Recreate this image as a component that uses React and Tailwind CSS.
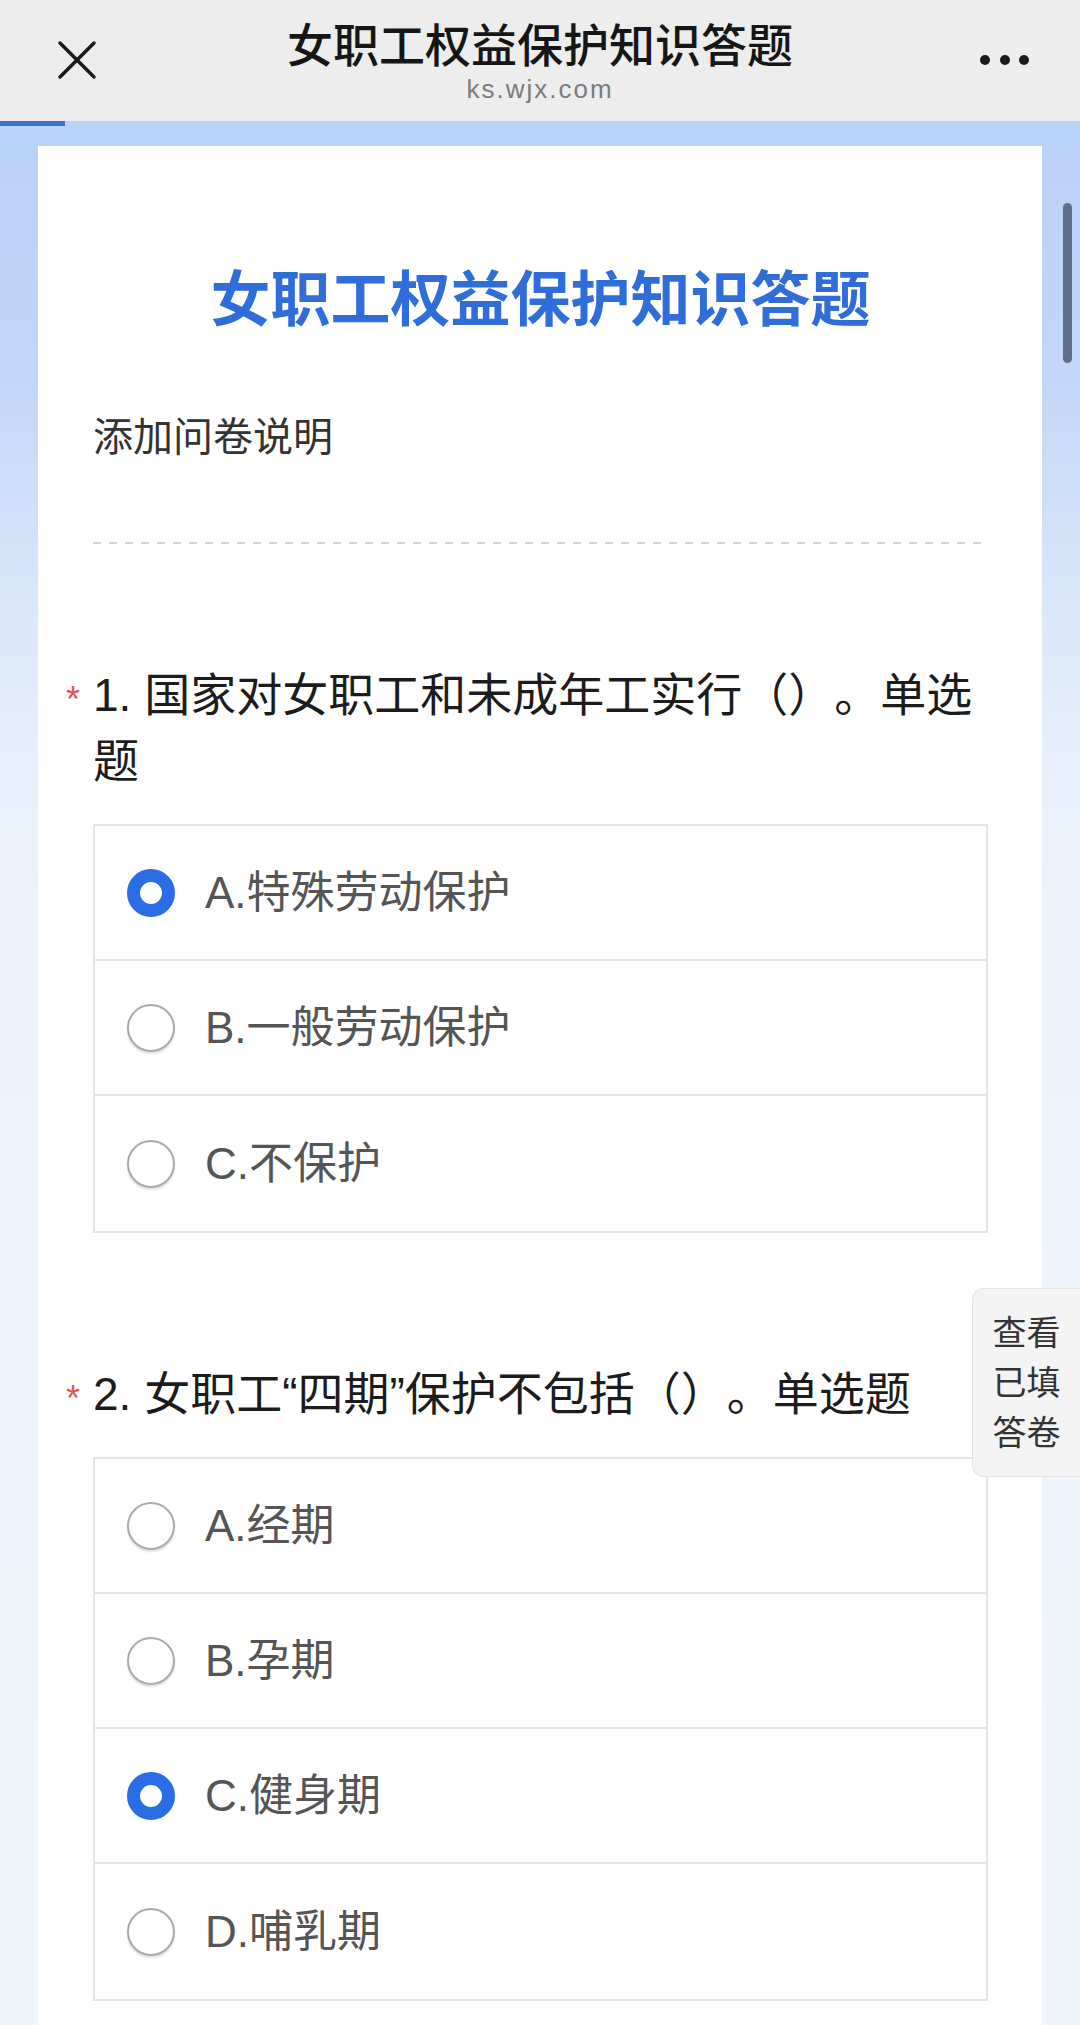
import React from 'react';

const questions = [
  {
    no: 1,
    text: '国家对女职工和未成年工实行（）。单选题',
    options: ['A.特殊劳动保护', 'B.一般劳动保护', 'C.不保护'],
    picked: 0,
  },
  {
    no: 2,
    text: '女职工“四期”保护不包括（）。单选题',
    options: ['A.经期', 'B.孕期', 'C.健身期', 'D.哺乳期'],
    picked: 2,
  },
];

const Radio = ({ on }) =>
  on ? (
    <span className="w-12 h-12 shrink-0 rounded-full border-[13px] border-[#2b6de5] bg-white"></span>
  ) : (
    <span className="w-12 h-12 shrink-0 rounded-full border-[2.5px] border-[#ababab] bg-white shadow-[0_2px_2px_rgba(0,0,0,0.12)]"></span>
  );

const Question = ({ q, className }) => (
  <div className={className}>
    <div className="flex -ml-[27px]">
      <span className="w-[27px] shrink-0 pt-[20px] text-[36px] leading-[36px] text-[#e05555]">*</span>
      <div className="flex-1 text-[46px] leading-[66px] text-[#1c1c1c] [text-spacing-trim:space-all]">
        {`${q.no}. ${q.text}`}
      </div>
    </div>
    <div className="mt-[30px] border-2 border-[#e5e5e5] divide-y-2 divide-[#e5e5e5]">
      {q.options.map((opt, i) => (
        <div key={opt} className="h-[135px] flex items-center pl-[32px]">
          <Radio on={i === q.picked} />
          <span className="ml-[30px] text-[44px] leading-[50px] text-[#555]">{opt}</span>
        </div>
      ))}
    </div>
  </div>
);

export default function App() {
  return (
    <div className="relative w-full h-[2025px] overflow-hidden font-['Liberation_Sans','Noto_Sans_CJK_SC',sans-serif]">
      <header className="h-[121px] bg-[#ededed] flex items-start">
        <div className="w-[120px] pl-[57px] pt-[40px]">
          <svg width="40" height="40" viewBox="0 0 40 40" fill="none" stroke="#1a1a1a" strokeWidth="3.5" strokeLinecap="round">
            <path d="M3 3L37 37M37 3L3 37" />
          </svg>
        </div>
        <div className="flex-1 flex flex-col items-center pt-[18px]">
          <div className="text-[46px] leading-[56px] font-medium text-[#161616]">女职工权益保护知识答题</div>
          <div className="text-[26px] leading-[30px] tracking-[2px] text-[#7c7c7c]">ks.wjx.com</div>
        </div>
        <div className="w-[120px] pl-[20px] pt-[55px] flex gap-[9.5px]">
          <span className="w-[10px] h-[10px] rounded-full bg-[#1a1a1a]"></span>
          <span className="w-[10px] h-[10px] rounded-full bg-[#1a1a1a]"></span>
          <span className="w-[10px] h-[10px] rounded-full bg-[#1a1a1a]"></span>
        </div>
      </header>

      <main className="px-[38px] h-[1904px] bg-[linear-gradient(to_bottom,#b9d1f6_0px,#c3d8f7_260px,#e4eefb_600px,#eef4fc_800px,#f1f6fc_100%)]">
        <div className="-ml-[38px] h-[5px] w-[65px] bg-[#3a70d0]"></div>
        <section className="mt-[20px] bg-white h-[1879px] pt-[120px] pl-[55px] pr-[54px]">
          <h1 className="text-center text-[60px] leading-[70px] font-bold text-[#2f6ddb]">女职工权益保护知识答题</h1>
          <p className="mt-[76px] text-[40px] leading-[50px] text-[#333]">添加问卷说明</p>
          <div className="mt-[80px] h-[2px] bg-[repeating-linear-gradient(to_right,#d2d2d2_0px,#d2d2d2_8px,transparent_8px,transparent_16px)]"></div>
          <Question q={questions[0]} className="mt-[118px]" />
          <Question q={questions[1]} className="mt-[128px]" />
        </section>
      </main>

      <div className="absolute left-[1063px] top-[203px] w-[9px] h-[160px] rounded-full bg-[#5f6f88]"></div>

      <div className="absolute left-[972px] top-[1288px] w-[108px] h-[189px] rounded-l-[12px] border border-r-0 border-[#e4e4e4] bg-[#f4f4f4] flex flex-col items-center justify-center text-[34px] leading-[50px] text-[#333]">
        <span>查看</span>
        <span>已填</span>
        <span>答卷</span>
      </div>
    </div>
  );
}
